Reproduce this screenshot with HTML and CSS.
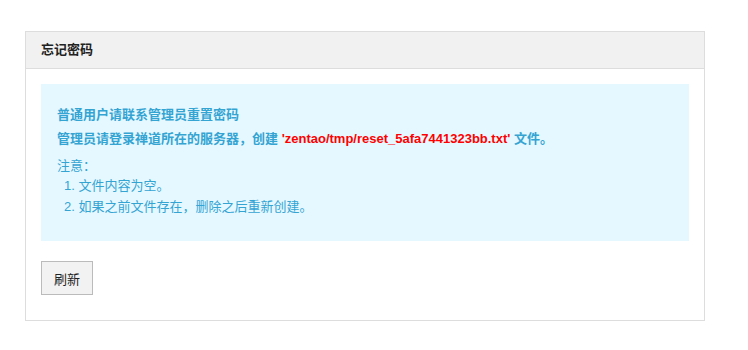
FILE: index.html
```html
<!DOCTYPE HTML>
<html lang=zh-CN>
	<head>
		<meta charset=utf-8>
		<title>忘记密码</title>
		<link rel="stylesheet" href="styles.css">
	</head>
	<body>
		<div class=panel>
			<div class=panelHeading>忘记密码</div>
			<div class=panelBody>
				<div class=alert>
					<div class=line><strong>普通用户请联系管理员重置密码</strong></div>
					<div class="line second"><strong>管理员请登录禅道所在的服务器，创建 <span class=red>'zentao/tmp/reset_5afa7441323bb.txt'</span> 文件。</strong></div>
					<div class="line note">注意：</div>
					<div class="line item">1. 文件内容为空。</div>
					<div class="line item">2. 如果之前文件存在，删除之后重新创建。</div>
				</div>
				<button class=btn type=button>刷新</button>
			</div>
		</div>
	</body>
</html>
```

FILE: styles.css
```css
html, body {
	margin: 0;
	padding: 0;
	background: #fff;
}

body {
	padding: 31px 0 0 25px;
	font-family: "Liberation Sans", "Noto Sans CJK SC", sans-serif;
	font-size: 13px;
	color: #333;
}

.panel {
	width: 678px;
	border: 1px solid #ddd;
}

.panelHeading {
	height: 36px;
	line-height: 36px;
	padding-left: 15px;
	background: #f1f1f1;
	border-bottom: 1px solid #ddd;
	font-weight: bold;
	color: #222;
}

.panelBody {
	padding: 15px 15px 25px;
}

.alert {
	background: #e5f8ff;
	color: #34a4d3;
	padding: 21px 16px 24px;
}

.line {
	line-height: 20px;
}

.second {
	margin-top: 4px;
}

.note {
	margin-top: 7px;
}

.item {
	padding-left: 7px;
	line-height: 20.5px;
}

.red {
	color: #f00;
}

.btn {
	display: block;
	margin-top: 20px;
	width: 52px;
	height: 34px;
	padding: 0;
	font: inherit;
	color: #222;
	background: #f2f2f2;
	border: 1px solid #bbb;
}
```
